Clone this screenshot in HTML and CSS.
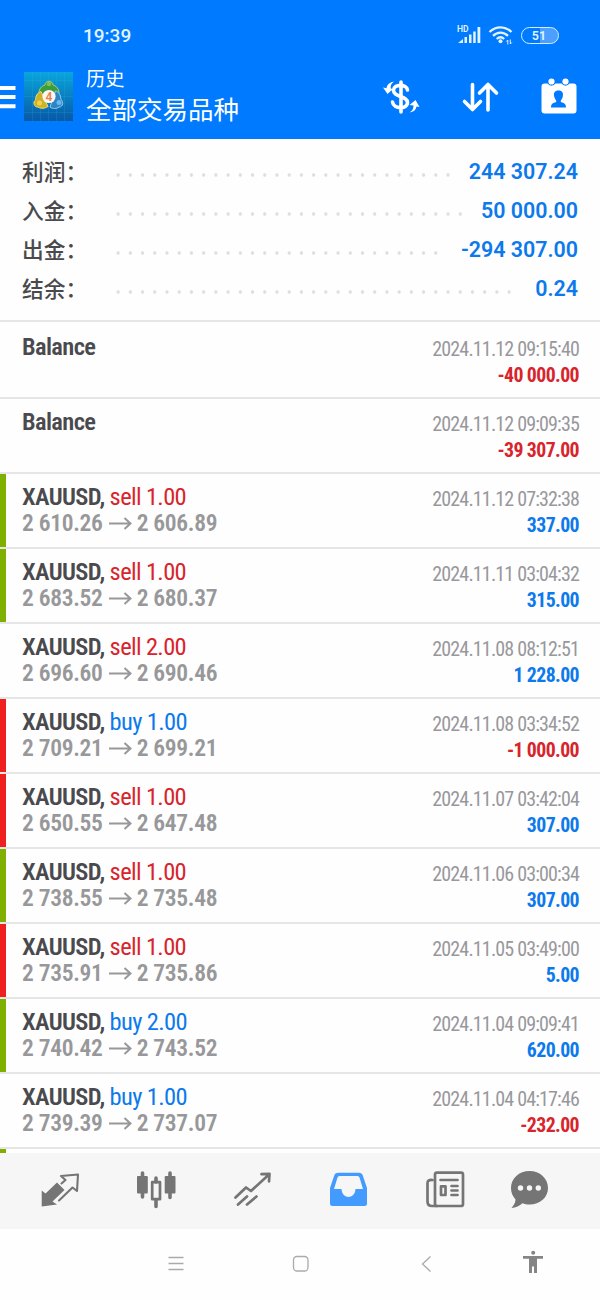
FILE: index.html
```html
<!DOCTYPE html>
<html lang="zh-CN">

<head>
    <meta charset="UTF-8">
    <meta name="viewport" content="width=device-width, initial-scale=1.0">
    <title>历史</title>
    <link rel="stylesheet" href="styles.css">
</head>

<body>
    <header class="topbar">
        <div class="status">
            <span class="time">19:39</span>
            <svg class="signal" width="26" height="20" viewBox="0 0 26 20">
                <text x="0" y="7">HD</text>
                <path d="M1 18l5-4v4zM7.500 18v-6h2.500v6zM12 18v-8.500h2.500v8.500zM16.200 18V6.500h2.500V18zM20.500 18V2h2.800v16z" />
            </svg>
            <svg class="wifi" width="26" height="20" viewBox="0 0 26 20">
                <path d="M1.500 7C8 .8 17 .8 23.500 7M5 10.800c4.500-4.300 10.500-4.300 15 0M8.700 14c2.500-2.300 5-2.300 7.500 0" />
                <circle cx="12.500" cy="16.300" r="2" />
                <path class="data" d="M19.800 19.500v-4.500l-1.500 1.500M22.300 14.500v4.500l1.500-1.500" />
            </svg>
            <span class="battery">51</span>
        </div>
        <div class="toolbar">
            <svg class="menu" width="16" height="24" viewBox="0 0 16 24">
                <path d="M0 3h15.500M0 12h15.500M0 21.200h15.500" />
            </svg>
            <svg class="logo" width="49" height="49" viewBox="0 0 49 49">
                <defs>
                    <linearGradient id="sky" x1="0" y1="0" x2="0" y2="1">
                        <stop offset="0" stop-color="#08a6dc" />
                        <stop offset="1" stop-color="#0759a6" />
                    </linearGradient>
                </defs>
                <rect width="49" height="49" fill="url(#sky)" />
                <path class="grid" d="M8.500 0v49M16.500 0v49M24.500 0v49M32.500 0v49M40.500 0v49M0 8.500h49M0 24.500h49M0 40.500h49" />
                <path fill="#3f9c3c" stroke="#a5cf7c" d="M15 25c-1-6 1-10.500 6-12 0-5 8-5 8 0 5 1.500 7 6 5.500 12z" />
                <path fill="#2d84c6" stroke="#8fcdf0" d="M26 35c3 2 6.500 2 9 0 4.500 0 4.500-6 2-7.500-.5-5-2.500-8-5.500-8.500z" />
                <path fill="#cdb128" stroke="#eadd7a" d="M17 19.500c-4 1.500-5.500 5-5.500 8.500-3 2-1.500 7.500 2.500 7 3 2 7 1.500 10-.5z" />
                <circle cx="25" cy="12" r="2.300" fill="#7fbf59" />
                <circle cx="15.500" cy="31" r="2.500" fill="#f0d34a" />
                <circle cx="35" cy="30.500" r="2.500" fill="#6cb9e8" />
                <circle cx="25" cy="24.500" r="6.600" fill="#fbf7f2" />
                <text x="25" y="28.800">4</text>
            </svg>
            <div class="titles">
                <div class="screen">历史</div>
                <div class="symbol">全部交易品种</div>
            </div>
            <svg class="tool" width="40" height="40" viewBox="0 0 40 40">
                <path class="line" d="M26.500 13c-.5-6-14-6.500-14 .5s14 5 14 12-14 7-15-.5M20 5v30" />
                <path d="M13 4.500C10 7 9.500 8.500 9.800 11.500l2.200.5-5.500 5L2 10.500l3.500.8C6 8 8 5.500 13 4.500zM28.500 35.500c3-2 4-4 4-7l-4-.5 6-5 4 7-3-.5c-.5 3.500-3 5.500-7 6z" />
            </svg>
            <svg class="tool" width="40" height="40" viewBox="0 0 40 40">
                <path class="line" d="M12.500 7.500v25M4.500 24.500l8 8 8-8M28 33V8M19.500 16l8.500-8.500 8.500 8.500" />
            </svg>
            <svg class="tool" width="40" height="40" viewBox="0 0 40 40">
                <path d="M5.500 6.500h3a4.800 4.800 0 0 0 8 0h6a4.800 4.800 0 0 0 8 0h4q3 0 3 3v24q0 3-3 3h-29q-3 0-3-3V9.500q0-3 3-3z" />
                <circle cx="12.500" cy="4.500" r="3.100" />
                <circle cx="26.500" cy="4.500" r="3.100" />
                <path class="hole" d="M19.500 13.500c-4 0-5 2.500-4.300 6 .3 1.800 1.300 3 2 4v1.500c-3.500 1-5.200 2-5.200 5.500h15c0-3.500-1.700-4.500-5.200-5.500v-1.500c.7-1 1.700-2.200 2-4 .7-3.500-.3-6-4.300-6z" />
            </svg>
        </div>
    </header>

    <section class="summary">
        <div class="total"><span class="label">利润：</span><span class="dots"></span><span class="value">244 307.24</span></div>
        <div class="total"><span class="label">入金：</span><span class="dots"></span><span class="value">50 000.00</span></div>
        <div class="total"><span class="label">出金：</span><span class="dots"></span><span class="value">-294 307.00</span></div>
        <div class="total"><span class="label">结余：</span><span class="dots"></span><span class="value">0.24</span></div>
    </section>

    <main id="history" class="history"></main>

    <nav class="tabs">
        <svg width="40" height="40" viewBox="0 0 40 40">
            <path class="fill" d="M1.700 19.500l3.800 3L17 11.500l7.500 7.500-12 11.500 4.500 3L1.700 35.500z" />
            <path class="line thin" d="M21.500 12.500l4-3.500L21 5l17-1.500-1 16.500-4.500-3.500L19 29.500" />
        </svg>
        <svg width="40" height="40" viewBox="0 0 40 40">
            <rect class="fill" x="1" y="5" width="10.800" height="17.500" rx="1" />
            <rect class="fill" x="28.700" y="5" width="10.800" height="17.500" rx="1" />
            <path class="line wick" d="M6.500 2v24M34 2v24.500M20 7v4M20 29v6.500" />
            <rect class="line" x="16.200" y="11.200" width="7.800" height="17" />
        </svg>
        <svg width="40" height="40" viewBox="0 0 40 40">
            <path class="line" d="M3.500 26.500L14 16.500l5 3.500L37 3.500M29.500 3.200l8-.4-.5 7.500M6 33.500l9-8M15 33.500l9.500-8" />
        </svg>
        <svg class="active" width="40" height="40" viewBox="0 0 40 40">
            <path class="fill" fill-rule="evenodd" d="M10 1.800h21q2.500 0 3.500 2L39 17v15.500q0 2.500-2.500 2.500h-32Q2 35 2 32.500V17L6.500 3.800q1-2 3.500-2zM11.500 5Q10 5 9.500 6.500L6 18h7.500c.5 10.500 13.500 10.500 14 0H35L31.500 6.500Q31 5 29.500 5z" />
        </svg>
        <svg width="40" height="40" viewBox="0 0 40 40">
            <rect class="line" x="10" y="1.600" width="28" height="33.400" rx="2" />
            <path class="line" d="M7.500 9Q2.500 8.500 2.500 12v18.500q0 4.500 4.500 4.500h5M15.500 9h17M26.500 15h6M26.500 19.500h6M26.500 24h6" />
            <rect class="line" x="16" y="15.300" width="4.500" height="8.700" />
        </svg>
        <svg width="40" height="40" viewBox="0 0 40 40">
            <path class="fill" d="M20.500 0C31 0 39 7.500 39 17s-8 16.500-18.500 16.500c-2.500 0-5-.3-7-1.200C10.500 35 7 36.500 2.500 37 5 34 6.500 31.500 6.500 28.500 3.500 25 2 21.500 2 17 2 7.500 10 0 20.500 0z" />
            <path class="holes" d="M11.500 17h.01M20.500 17h.01M29.300 17h.01" />
        </svg>
    </nav>

    <footer class="navbar">
        <svg width="24" height="24" viewBox="0 0 24 24">
            <path d="M4.500 6.500h15M4.500 12.500h15M4.500 18.500h15" />
        </svg>
        <svg width="24" height="24" viewBox="0 0 24 24">
            <rect x="4.500" y="5.500" width="14.500" height="14.500" rx="3.500" />
        </svg>
        <svg width="24" height="24" viewBox="0 0 24 24">
            <path d="M16.500 5.500L8.500 13l8 7.500" />
        </svg>
        <svg width="24" height="24" viewBox="0 0 24 24">
            <path class="person" d="M3 5h20v2.700h-6V22h-3v-6.500h-2V22H9V7.700H3z" />
            <circle class="person" cx="13.200" cy="1.800" r="2" />
        </svg>
    </footer>

    <script>
        let deals = [
            { date: '2024.11.12 09:15:40', profit: '-40 000.00' },
            { date: '2024.11.12 09:09:35', profit: '-39 307.00' },
            { type: 'sell', lots: '1.00', open: '2 610.26', close: '2 606.89', date: '2024.11.12 07:32:38', profit: '337.00', mark: 'tp' },
            { type: 'sell', lots: '1.00', open: '2 683.52', close: '2 680.37', date: '2024.11.11 03:04:32', profit: '315.00', mark: 'tp' },
            { type: 'sell', lots: '2.00', open: '2 696.60', close: '2 690.46', date: '2024.11.08 08:12:51', profit: '1 228.00' },
            { type: 'buy', lots: '1.00', open: '2 709.21', close: '2 699.21', date: '2024.11.08 03:34:52', profit: '-1 000.00', mark: 'sl' },
            { type: 'sell', lots: '1.00', open: '2 650.55', close: '2 647.48', date: '2024.11.07 03:42:04', profit: '307.00', mark: 'sl' },
            { type: 'sell', lots: '1.00', open: '2 738.55', close: '2 735.48', date: '2024.11.06 03:00:34', profit: '307.00', mark: 'tp' },
            { type: 'sell', lots: '1.00', open: '2 735.91', close: '2 735.86', date: '2024.11.05 03:49:00', profit: '5.00', mark: 'sl' },
            { type: 'buy', lots: '2.00', open: '2 740.42', close: '2 743.52', date: '2024.11.04 09:09:41', profit: '620.00', mark: 'tp' },
            { type: 'buy', lots: '1.00', open: '2 739.39', close: '2 737.07', date: '2024.11.04 04:17:46', profit: '-232.00' }
        ];
        let arrow = '<svg class="arrow" width="23" height="14" viewBox="0 0 23 14"><path d="M0 6.500h21M15.500 1l6 5.500-6 5.500" /></svg>';
        let html = '';
        deals.forEach(function (deal) {
            let left = '<div class="name">Balance</div>';
            if (deal.type) {
                left = `<div class="name">XAUUSD, <span class="${deal.type}">${deal.type} ${deal.lots}</span></div>
                    <div class="prices">${deal.open}${arrow}${deal.close}</div>`;
            }
            let sign = deal.profit.startsWith('-') ? 'loss' : 'gain';
            html += `<div class="deal ${deal.mark || ''}">
                <div class="left">${left}</div>
                <div class="right">
                    <div class="date">${deal.date}</div>
                    <div class="profit ${sign}">${deal.profit}</div>
                </div>
            </div>`;
        });
        // top edge of the next deal, cut off by the tabs
        html += '<div class="deal tp"></div>';
        document.getElementById('history').innerHTML = html;
    </script>
</body>

</html>
```

FILE: styles.css
```css
body {
    margin: 0;
    height: 1300px;
    overflow: hidden;
    display: flex;
    flex-direction: column;
    background-color: #fefefe;
    font-family: Roboto, "Noto Sans CJK SC", sans-serif;
}

svg {
    display: block;
    flex-shrink: 0;
}

.topbar {
    height: 139px;
    background-color: #007aff;
    color: #fff;
}

.status {
    display: flex;
    align-items: center;
    box-sizing: border-box;
    height: 70px;
    padding: 0 41px 0 83px;
}

.time {
    flex: 1;
    font-size: 19px;
    font-weight: 500;
    color: #e2f4ff;
}

.signal,
.wifi {
    fill: #e2f4ff;
}

.signal {
    margin-right: 5px;
}

.signal text {
    font-size: 8.5px;
    font-weight: 600;
}

.wifi {
    margin-right: 7px;
}

.wifi path {
    fill: none;
    stroke: #e2f4ff;
    stroke-width: 2.3;
}

.wifi .data {
    stroke-width: 1;
}

.battery {
    box-sizing: border-box;
    width: 38px;
    height: 17px;
    padding-right: 2px;
    border: 1.5px solid #d5eeff;
    border-radius: 9px;
    background: linear-gradient(90deg, #007aff 50%, #4d9fff 50%);
    font-size: 12.5px;
    font-weight: 600;
    line-height: 15px;
    text-align: center;
    color: #e2f4ff;
}

.toolbar {
    display: flex;
    align-items: center;
    height: 53px;
    padding-right: 21px;
}

.menu {
    stroke: #fff;
    stroke-width: 4;
    margin-right: 8px;
}

.logo .grid {
    stroke: #4fb3e6;
    stroke-width: 0.5;
    opacity: 0.35;
}

.logo text {
    font-size: 12px;
    font-weight: 600;
    text-anchor: middle;
    fill: #e8824a;
}

.titles {
    flex: 1;
    padding: 1px 0 0 13px;
}

.screen {
    font-size: 19.2px;
    line-height: 26px;
}

.symbol {
    font-size: 25.5px;
    line-height: 35px;
}

.tool {
    overflow: visible;
    fill: #fff;
    margin-left: 39px;
}

.tool .line {
    fill: none;
    stroke: #fff;
    stroke-width: 3.6;
    stroke-linecap: round;
    stroke-linejoin: round;
}

.tool .hole {
    fill: #007aff;
}

.summary {
    box-sizing: border-box;
    height: 183px;
    padding: 13px 22px 0;
    border-bottom: 2px solid #e6e6e6;
    margin-bottom: 2px;
}

.total {
    display: flex;
    align-items: center;
    height: 39px;
}

.label {
    width: 90.4px;
    margin-top: -2px;
    font-size: 21.7px;
    font-weight: 500;
    color: #4a4a4c;
}

.dots {
    flex: 1;
    height: 4px;
    margin: 7px 18px 0 0;
    background: radial-gradient(circle, #dedee0 1.4px, transparent 2px) 0 0 / 12.23px 4px;
}

.value {
    font-size: 21.4px;
    font-weight: 600;
    color: #0c79ec;
}

.history {
    flex: 1;
    overflow: hidden;
    font-family: "Roboto Condensed", Roboto, sans-serif;
}

.deal {
    display: flex;
    box-sizing: border-box;
    height: 75px;
    padding-right: 21px;
    border-bottom: 2px solid #e6e6e6;
    white-space: nowrap;
}

.deal::before {
    content: "";
    width: 6px;
}

.tp::before {
    background-color: #7fb000;
}

.sl::before {
    background-color: #ee2020;
}

.left {
    flex: 1;
    padding: 10px 0 0 16px;
}

.right {
    padding-top: 12.4px;
    text-align: right;
}

.name,
.prices,
.date,
.profit {
    line-height: 26.4px;
}

.name {
    font-size: 24.5px;
    font-weight: 600;
    letter-spacing: -0.65px;
    color: #4a4a4e;
}

.name span {
    font-weight: 400;
}

.prices {
    display: flex;
    align-items: center;
    font-size: 23.5px;
    font-weight: 600;
    letter-spacing: -0.3px;
    color: #98989a;
}

.arrow {
    margin: 0 5px 0 6px;
    fill: none;
    stroke: #98989a;
    stroke-width: 2;
}

.date {
    font-size: 20px;
    letter-spacing: -0.84px;
    color: #98989c;
}

.profit {
    font-size: 19.8px;
    font-weight: 700;
    letter-spacing: -0.6px;
}

.sell,
.loss {
    color: #d8242c;
}

.buy,
.gain {
    color: #0c79ec;
}

.tabs {
    display: grid;
    grid-template-columns: repeat(4, 96px) 97px 72px;
    align-items: center;
    justify-items: center;
    height: 76px;
    padding-left: 12px;
    background-color: #f6f6f6;
}

.tabs .fill {
    fill: #757575;
}

.tabs .active .fill {
    fill: #439bff;
}

.tabs .line {
    fill: none;
    stroke: #757575;
    stroke-width: 2.7;
    stroke-linecap: round;
    stroke-linejoin: round;
}

.tabs .thin {
    stroke-width: 2.1;
}

.tabs .wick {
    stroke-width: 3.6;
}

.tabs .holes {
    stroke: #f6f6f6;
    stroke-width: 5.4;
    stroke-linecap: round;
}

.navbar {
    display: grid;
    grid-template-columns: 124px 125px 126px 86px;
    justify-items: center;
    box-sizing: border-box;
    height: 71px;
    padding: 22px 0 0 114px;
}

.navbar svg {
    overflow: visible;
    fill: none;
    stroke: #aaa;
    stroke-width: 1.3;
}

.navbar .person {
    fill: #858585;
    stroke: none;
}
```
